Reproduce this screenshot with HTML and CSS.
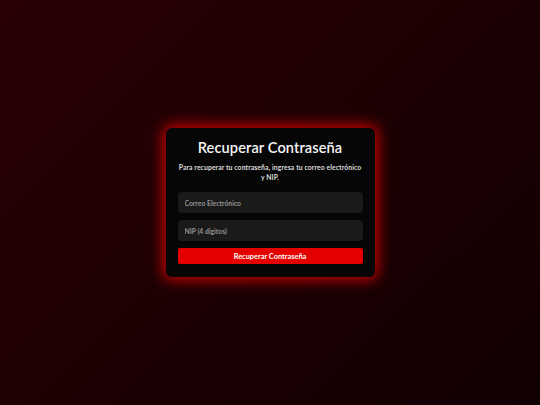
FILE: index.html
```html
<!DOCTYPE html>
<html lang="es">
<head>
<meta charset="utf-8">
<title>Recuperar Contraseña</title>
<link rel="stylesheet" href="styles.css">
</head>
<body>
<main class="page">
  <form class="card">
    <h1 class="title">Recuperar Contraseña</h1>
    <p class="subtitle">Para recuperar tu contraseña, ingresa tu correo electrónico y NIP.</p>
    <input class="field" type="email" placeholder="Correo Electrónico">
    <input class="field" type="password" placeholder="NIP (4 dígitos)">
    <button class="btn" type="button">Recuperar Contraseña</button>
  </form>
</main>
</body>
</html>
```

FILE: styles.css
```css
* { box-sizing: border-box; }
html, body { margin: 0; padding: 0; }
body {
  font-family: Lato, "Open Sans", sans-serif;
  background: linear-gradient(135deg, #2a0005 0%, #1d0003 50%, #110002 100%);
  width: 540px;
  height: 405px;
  overflow: hidden;
}
.page {
  width: 540px;
  height: 405px;
  display: flex;
  align-items: center;
  justify-content: center;
}
.card {
  width: 209px;
  padding: 10px 12px 13px;
  background: #060606;
  border-radius: 6px;
  box-shadow: 0 0 14px 3px rgba(255, 0, 0, 0.75);
  display: flex;
  flex-direction: column;
}
.title {
  margin: 0;
  font-size: 14.6px;
  line-height: 20px;
  font-weight: 600;
  color: #f6f6f6;
  text-align: center;
  letter-spacing: 0.1px;
}
.subtitle {
  margin: 4px 0 10px;
  font-size: 6.8px;
  line-height: 10px;
  font-weight: 700;
  color: #dcdcdc;
  text-align: center;
  letter-spacing: 0.1px;
}
.field {
  height: 21px;
  margin: 0 0 7px;
  padding: 0 7px;
  border: none;
  border-radius: 4px;
  background: #1b1a1a;
  font-family: inherit;
  font-size: 6.8px;
  font-weight: 700;
  color: #ddd;
  outline: none;
}
.field::placeholder { color: #929292; }
.btn {
  height: 16px;
  border: none;
  border-radius: 2px;
  background: #e50000;
  color: #fff;
  font-family: inherit;
  font-size: 7.4px;
  font-weight: 700;
  padding: 0;
  cursor: pointer;
}
```
